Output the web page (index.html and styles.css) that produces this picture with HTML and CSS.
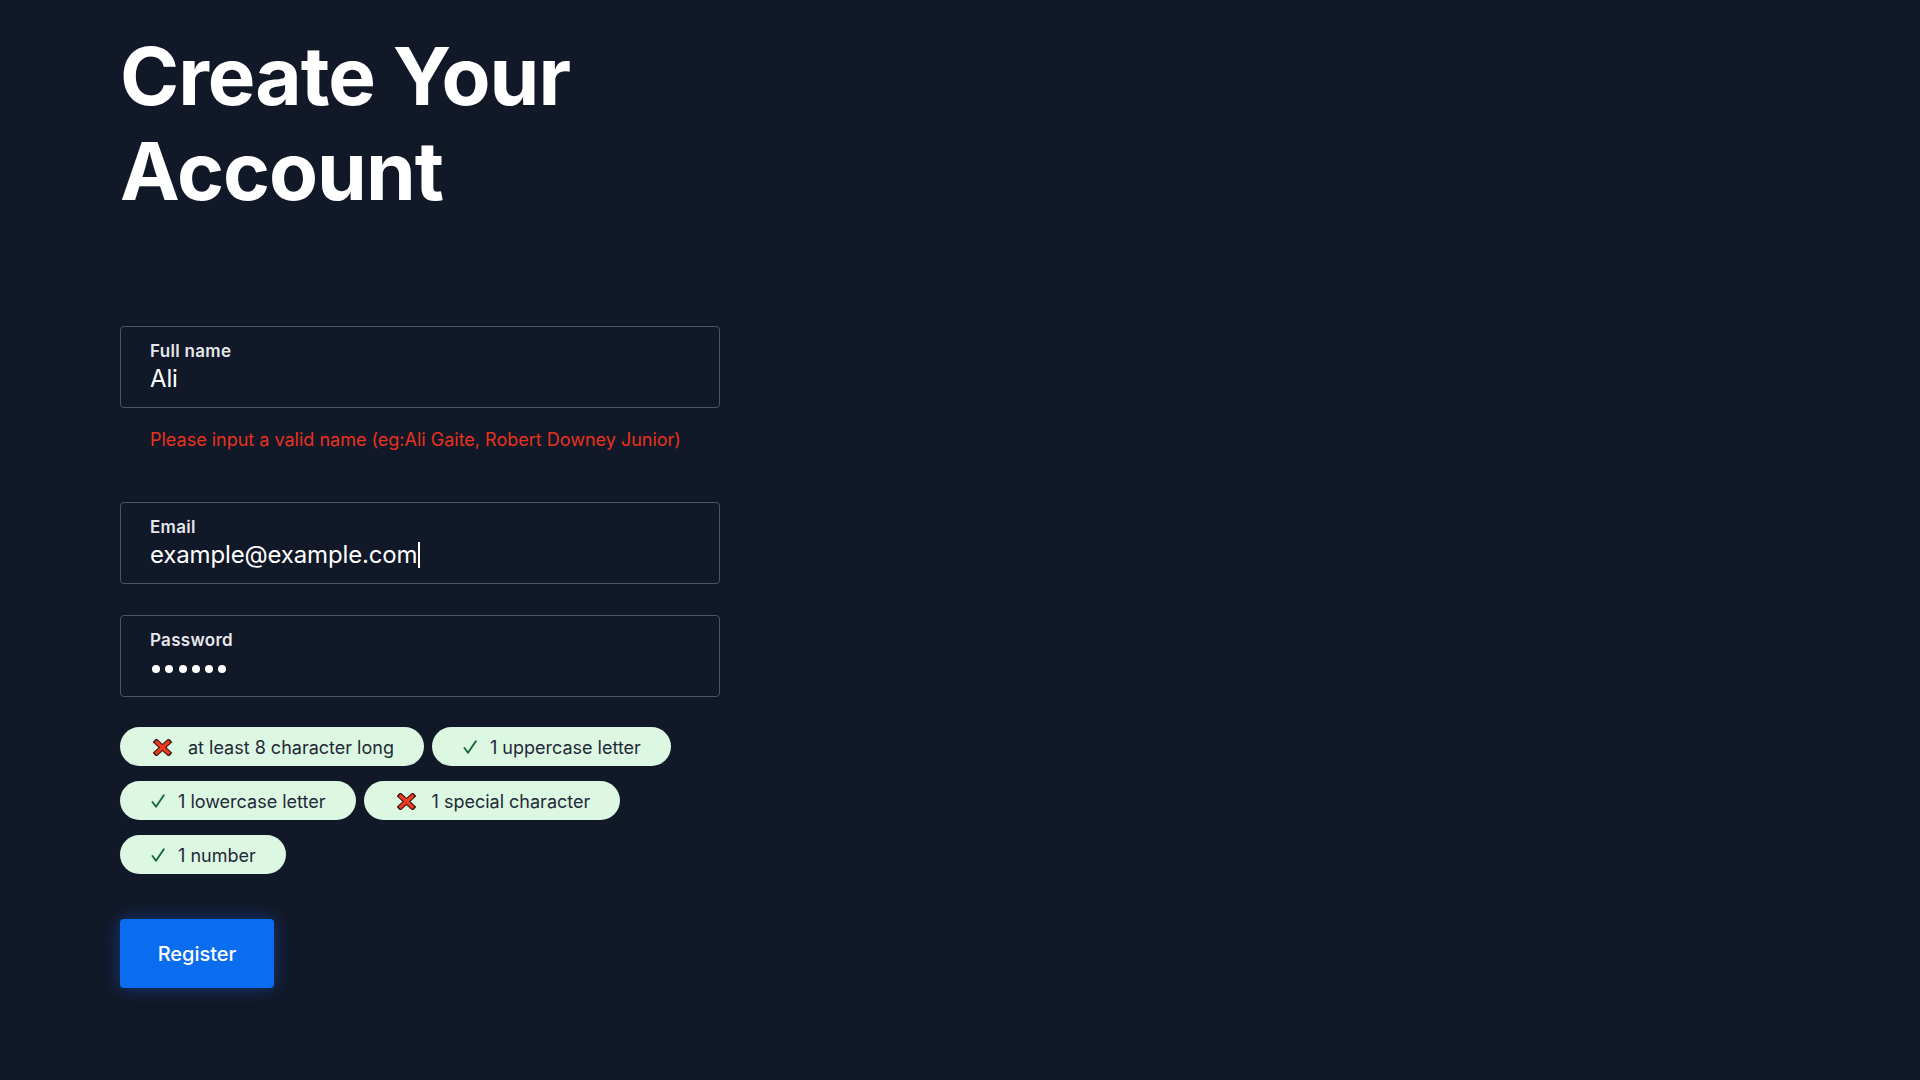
FILE: index.html
```html
<!DOCTYPE html>
<html lang="en">
<head>
<meta charset="utf-8">
<title>Create Your Account</title>
<link rel="stylesheet" href="styles.css">
</head>
<body>
<main class="page">
  <h1 class="title">Create Your<br>Account</h1>
  <form class="form">
    <div class="field">
      <label class="field-label">Full name</label>
      <div class="field-value">Ali</div>
    </div>
    <p class="error">Please input a valid name (eg:Ali Gaite, Robert Downey Junior)</p>

    <div class="field field-email">
      <label class="field-label">Email</label>
      <div class="field-value">example@example.com<span class="caret"></span></div>
    </div>

    <div class="field field-password">
      <label class="field-label">Password</label>
      <div class="field-value dots">
        <span class="dot"></span><span class="dot"></span><span class="dot"></span><span class="dot"></span><span class="dot"></span><span class="dot"></span>
      </div>
    </div>

    <div class="chips">
      <span class="chip chip-fail"><svg class="icon-x" viewBox="0 0 19 17"><path d="M3.5 3 L15.5 14 M15.5 3 L3.5 14" stroke="#3b1610" stroke-width="5.4" stroke-linecap="square"/><path d="M3.8 3.3 L15.2 13.7 M15.2 3.3 L3.8 13.7" stroke="#ee3b1f" stroke-width="3.2" stroke-linecap="square"/></svg>at least 8 character long</span>
      <span class="chip chip-pass"><svg class="icon-check" viewBox="0 0 14 14"><path d="M1.5 8 L5 12.8 L12.8 1.2" fill="none" stroke="#17693a" stroke-width="1.9" stroke-linecap="round" stroke-linejoin="round"/></svg>1 uppercase letter</span>
      <span class="chip chip-pass"><svg class="icon-check" viewBox="0 0 14 14"><path d="M1.5 8 L5 12.8 L12.8 1.2" fill="none" stroke="#17693a" stroke-width="1.9" stroke-linecap="round" stroke-linejoin="round"/></svg>1 lowercase letter</span>
      <span class="chip chip-fail"><svg class="icon-x" viewBox="0 0 19 17"><path d="M3.5 3 L15.5 14 M15.5 3 L3.5 14" stroke="#3b1610" stroke-width="5.4" stroke-linecap="square"/><path d="M3.8 3.3 L15.2 13.7 M15.2 3.3 L3.8 13.7" stroke="#ee3b1f" stroke-width="3.2" stroke-linecap="square"/></svg>1 special character</span>
      <span class="chip chip-pass"><svg class="icon-check" viewBox="0 0 14 14"><path d="M1.5 8 L5 12.8 L12.8 1.2" fill="none" stroke="#17693a" stroke-width="1.9" stroke-linecap="round" stroke-linejoin="round"/></svg>1 number</span>
    </div>

    <button type="button" class="btn">Register</button>
  </form>
</main>
</body>
</html>
```
FILE: styles.css
```css
* { box-sizing: border-box; }
html, body { margin: 0; padding: 0; }
body {
  background: #111827;
  color: #ffffff;
  font-family: Inter, "Noto Sans", "Liberation Sans", sans-serif;
  min-height: 1080px;
}
.page {
  padding: 28px 0 0 120px;
}
.title {
  margin: 0;
  font-size: 80px;
  line-height: 95px;
  font-weight: 700;
  letter-spacing: -1px;
  color: #ffffff;
}
.form {
  margin-top: 108px;
  width: 600px;
  display: flex;
  flex-direction: column;
}
.field {
  height: 82px;
  border: 1px solid #4b5563;
  border-radius: 4px;
  padding: 14px 29px 0;
  display: flex;
  flex-direction: column;
  gap: 4px;
}
.field-label {
  font-size: 17px;
  line-height: 20px;
  font-weight: 600;
  letter-spacing: 0.3px;
  color: #e5e7eb;
}
.field-value {
  height: 28px;
  font-size: 24px;
  line-height: 28px;
  letter-spacing: -0.15px;
  color: #ffffff;
  display: flex;
  align-items: center;
}
.caret {
  display: inline-block;
  width: 2px;
  height: 26px;
  background: #ffffff;
  margin-left: 1px;
}
.error {
  margin: 20px 0 0;
  padding-left: 30px;
  font-size: 18px;
  line-height: 24px;
  color: #e8321d;
}
.field-email { margin-top: 50px; }
.field-password { margin-top: 31px; }
.dots {
  gap: 5.3px;
  padding: 2px 0 0 2px;
}
.dot {
  width: 8px;
  height: 8px;
  border-radius: 50%;
  background: #ffffff;
}
.chips {
  margin-top: 30px;
  display: flex;
  flex-wrap: wrap;
  gap: 15px 8px;
}
.chip {
  height: 39px;
  display: inline-flex;
  align-items: center;
  padding: 1px 30px 0 31px;
  border-radius: 20px;
  background: #dcf7e2;
  color: #1f2937;
  font-size: 18px;
}
.chip-fail { padding-left: 33px; }
.icon-x {
  width: 19px;
  height: 17px;
  margin-right: 16px;
}
.icon-check {
  width: 14px;
  height: 14px;
  margin-right: 13px;
}
.btn {
  align-self: flex-start;
  margin-top: 45px;
  width: 154px;
  height: 69px;
  border: none;
  border-radius: 4px;
  background: #0a6df0;
  color: #ffffff;
  font-family: Inter, "Noto Sans", "Liberation Sans", sans-serif;
  font-size: 20px;
  font-weight: 500;
  box-shadow: 0 0 18px rgba(37, 99, 235, 0.45);
  cursor: pointer;
}
```
